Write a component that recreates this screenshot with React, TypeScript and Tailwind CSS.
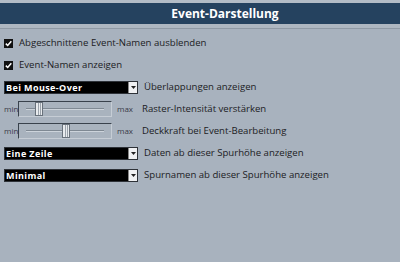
const font = { fontFamily: '"Open Sans", "Noto Sans", sans-serif' }

const Check = ({ label }: { label: string }) => (
  <div className="flex items-center h-[22px]">
    <div className="w-[9px] h-[9px] ml-[4px] bg-[#111] flex items-center justify-center">
      <svg width="7" height="7" viewBox="0 0 7 7">
        <path d="M0.8 3.6 L2.7 5.5 L6.3 1.2" stroke="#fff" strokeWidth="1.5" fill="none" />
      </svg>
    </div>
    <span className="ml-[6px] text-[9.6px] text-[#1c1c24]">{label}</span>
  </div>
)

const Dropdown = ({ value, label }: { value: string; label: string }) => (
  <div className="flex items-center h-[22px]">
    <div className="ml-[4px] flex h-[13px] w-[134px] border border-[#2e3238]">
      <div className="flex-1 bg-black text-white font-bold text-[9px] tracking-[0.4px] leading-[11px] pl-[1px]">{value}</div>
      <div className="w-[9px] bg-[#f0f1f3] flex items-center justify-center border-l border-[#888]">
        <svg width="5" height="3" viewBox="0 0 5 3"><path d="M0 0 H5 L2.5 3 Z" fill="#222" /></svg>
      </div>
    </div>
    <span className="ml-[6px] text-[9.6px] text-[#1c1c24]">{label}</span>
  </div>
)

const Slider = ({ pos, label }: { pos: number; label: string }) => (
  <div className="flex items-center h-[22px]">
    <span className="ml-[4px] w-[14px] text-[8px] text-[#3a3a48]">min</span>
    <div className="relative w-[94px] h-[16px] border border-[#39424c] border-b-[#c6cdd5] border-r-[#c6cdd5] bg-[#a9b3be]">
      <div className="absolute left-[7px] right-[7px] top-[6px] h-[2px] border-t border-[#7f8993] border-b border-b-[#cdd4db]" />
      <div
        className="absolute top-[0px] w-[8px] h-[14px] bg-[#e8ebee] border border-[#68717b] flex justify-center"
        style={{ left: pos }}
      >
        <div className="w-[3px] h-full border-x border-[#9aa2aa]" />
      </div>
    </div>
    <span className="ml-[5px] w-[25px] text-[8px] text-[#3a3a48]">max</span>
    <span className="text-[9.6px] text-[#1c1c24]">{label}</span>
  </div>
)

export default function App() {
  return (
    <div className="w-[400px] h-[262px] bg-[#a8b2be] overflow-hidden" style={font}>
      <div className="h-[3px] bg-[#b3bcc6]" />
      <div className="h-[21px] bg-[#25425f] flex items-center justify-center pl-[50px]">
        <span className="text-white font-bold text-[12px]">Event-Darstellung</span>
      </div>
      <div className="h-[4px] bg-[#aeb7c1]" />
      <div className="h-[1px] bg-[#8f99a4]" />
      <div className="pt-[3px]">
        <Check label="Abgeschnittene Event-Namen ausblenden" />
        <Check label="Event-Namen anzeigen" />
        <Dropdown value="Bei Mouse-Over" label="Überlappungen anzeigen" />
        <Slider pos={16} label="Raster-Intensität verstärken" />
        <Slider pos={43} label="Deckkraft bei Event-Bearbeitung" />
        <Dropdown value="Eine Zeile" label="Daten ab dieser Spurhöhe anzeigen" />
        <Dropdown value="Minimal" label="Spurnamen ab dieser Spurhöhe anzeigen" />
      </div>
    </div>
  )
}
